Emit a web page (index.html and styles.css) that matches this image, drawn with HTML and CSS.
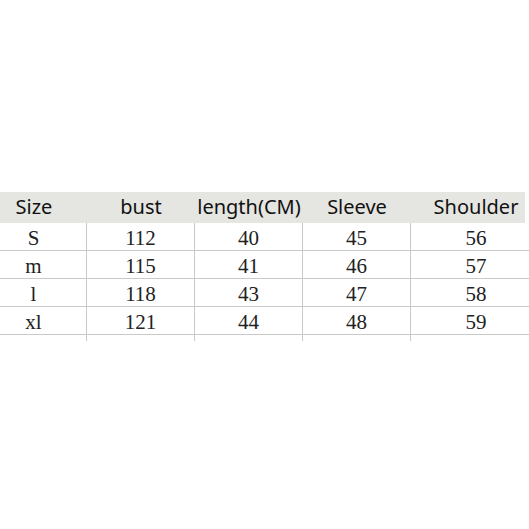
FILE: index.html
```html
<!DOCTYPE html>
<html>
<head>
<meta charset="utf-8">
<link rel="stylesheet" href="styles.css">
</head>
<body>
<div class="frame">
  <div class="sheet">
    <div class="row head">
      <div class="cell c1">Size</div>
      <div class="cell c2">bust</div>
      <div class="cell c3">length(CM)</div>
      <div class="cell c4">Sleeve</div>
      <div class="cell c5">Shoulder</div>
    </div>
    <div class="row body">
      <div class="cell c1">S</div>
      <div class="cell c2">112</div>
      <div class="cell c3">40</div>
      <div class="cell c4">45</div>
      <div class="cell c5">56</div>
    </div>
    <div class="row body">
      <div class="cell c1">m</div>
      <div class="cell c2">115</div>
      <div class="cell c3">41</div>
      <div class="cell c4">46</div>
      <div class="cell c5">57</div>
    </div>
    <div class="row body">
      <div class="cell c1">l</div>
      <div class="cell c2">118</div>
      <div class="cell c3">43</div>
      <div class="cell c4">47</div>
      <div class="cell c5">58</div>
    </div>
    <div class="row body">
      <div class="cell c1">xl</div>
      <div class="cell c2">121</div>
      <div class="cell c3">44</div>
      <div class="cell c4">48</div>
      <div class="cell c5">59</div>
    </div>
    <div class="row tail">
      <div class="cell c1"></div>
      <div class="cell c2"></div>
      <div class="cell c3"></div>
      <div class="cell c4"></div>
      <div class="cell c5"></div>
    </div>
  </div>
</div>
</body>
</html>
```
FILE: styles.css
```css
html, body {
  margin: 0;
  padding: 0;
  background: #ffffff;
}
.frame {
  width: 529px;
  padding-top: 192px;
  overflow: hidden;
}
.sheet {
  margin-left: -19px;
  width: 560px;
  display: flex;
  flex-direction: column;
}
.row {
  display: flex;
  box-sizing: border-box;
}
.cell {
  box-sizing: border-box;
  display: flex;
  align-items: center;
  justify-content: center;
  white-space: nowrap;
}
.c1 { width: 106px; }
.c2 { width: 108px; }
.c3 { width: 108px; }
.c4 { width: 108px; }
.c5 { width: 130px; }
.head {
  height: 31px;
  background: linear-gradient(to right, #e5e5e1 544px, transparent 544px);
  font-family: "Noto Sans", "Open Sans", sans-serif;
  font-size: 20px;
  color: #111111;
}
.head .cell {
  padding-bottom: 3px;
}
.body {
  height: 28px;
  border-bottom: 1px solid #c9c9c9;
  font-family: "Liberation Serif", "DejaVu Serif", serif;
  font-size: 21px;
  color: #222222;
}
.body .cell {
  padding-top: 3px;
}
.body .cell,
.tail .cell {
  border-right: 1px solid #c9c9c9;
}
.body .cell.c5,
.tail .cell.c5 {
  border-right: none;
}
.tail {
  height: 6px;
}
```
